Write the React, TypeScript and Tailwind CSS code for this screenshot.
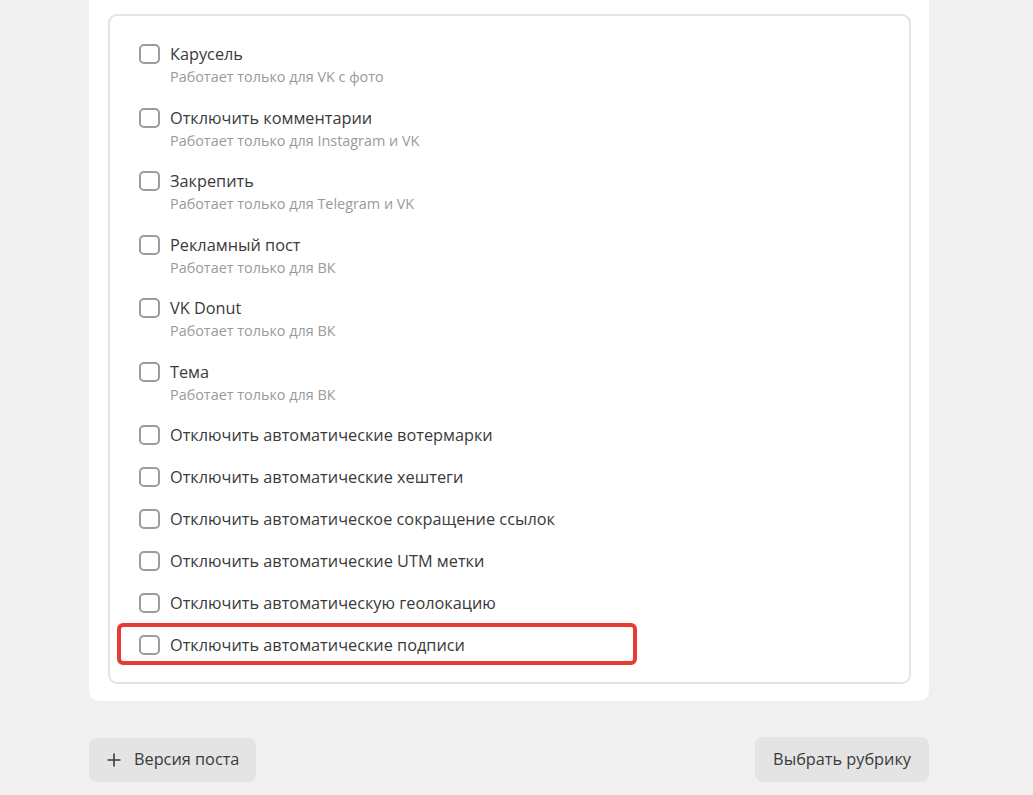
import React from "react";

const items: { label: string; sub?: string }[] = [
  { label: "Карусель", sub: "Работает только для VK с фото" },
  { label: "Отключить комментарии", sub: "Работает только для Instagram и VK" },
  { label: "Закрепить", sub: "Работает только для Telegram и VK" },
  { label: "Рекламный пост", sub: "Работает только для ВК" },
  { label: "VK Donut", sub: "Работает только для ВК" },
  { label: "Тема", sub: "Работает только для ВК" },
  { label: "Отключить автоматические вотермарки" },
  { label: "Отключить автоматические хештеги" },
  { label: "Отключить автоматическое сокращение ссылок" },
  { label: "Отключить автоматические UTM метки" },
  { label: "Отключить автоматическую геолокацию" },
  { label: "Отключить автоматические подписи" },
];

function Box() {
  return <span className="mt-[2px] h-[20px] w-[21px] shrink-0 rounded-[5px] border-2 border-[#9c9c9c] bg-white" />;
}

export default function App() {
  return (
    <div
      className="min-h-[795px] w-full bg-[#f0f0f0]"
      style={{ fontFamily: '"Open Sans", "Noto Sans", sans-serif' }}
    >
      <div className="ml-[89px] w-[840px] rounded-b-[10px] bg-white px-[19px] pb-[17px] pt-[14px]">
        <div className="flex w-[803px] flex-col gap-[18px] rounded-[9px] border-2 border-[#e4e4e4] pb-[25px] pl-[29px] pt-[26px]">
          {items.map((it, i) => (
            <div key={i} className="relative flex items-start gap-[10px]">
              {i === items.length - 1 && (
                <span className="pointer-events-none absolute left-[-22px] top-[-10px] h-[42px] w-[520px] rounded-[6px] border-4 border-[#e53b30]" />
              )}
              <Box />
              <div className="flex flex-col">
                <span className="text-[16.3px] leading-[24px] text-[#3a3a3a]">{it.label}</span>
                {it.sub && (
                  <span className="text-[14.4px] leading-[21.5px] text-[#9a9a9a]">{it.sub}</span>
                )}
              </div>
            </div>
          ))}
        </div>
      </div>
      <div className="ml-[89px] mt-[36px] flex w-[840px] items-center justify-between">
        <button className="flex h-[44px] items-center gap-[12px] rounded-[8px] bg-[#e4e4e4] pl-[17px] pr-[17px] text-[16.3px] text-[#3a3a3a]">
          <svg width="16" height="16" viewBox="0 0 16 16" fill="none" stroke="#3a3a3a" strokeWidth="1.6">
            <path d="M8 1.5v13M1.5 8h13" />
          </svg>
          <span>Версия поста</span>
        </button>
        <button className="flex h-[45px] items-center rounded-[8px] bg-[#e4e4e4] px-[18px] text-[16.3px] text-[#3a3a3a]">
          Выбрать рубрику
        </button>
      </div>
    </div>
  );
}
